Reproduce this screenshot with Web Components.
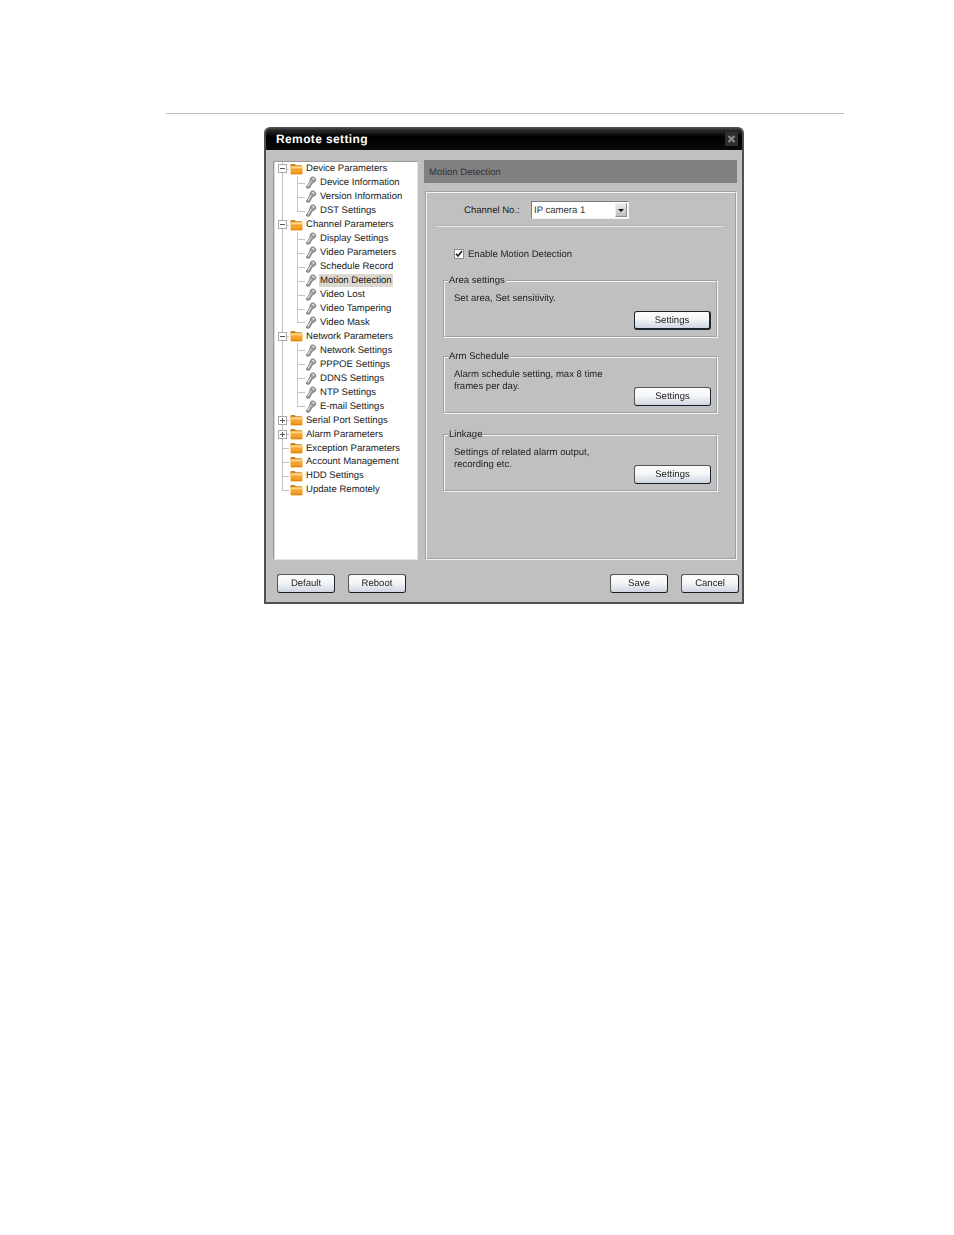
<!DOCTYPE html>
<html>
<head>
<meta charset="utf-8">
<title>Remote setting</title>
<style>
  html, body { margin: 0; background: #fff; }
  body { font: 9.55px "Liberation Sans", Arial, sans-serif; color: #333; text-rendering: geometricPrecision; }
</style>
</head>
<body>
<manual-page>
  <remote-window heading="Remote setting">
    <tree-view slot="tree">
      <tree-row kind="open" label="Device Parameters"></tree-row>
      <tree-row kind="leaf" label="Device Information"></tree-row>
      <tree-row kind="leaf" label="Version Information"></tree-row>
      <tree-row kind="leaf" last label="DST Settings"></tree-row>
      <tree-row kind="open" label="Channel Parameters"></tree-row>
      <tree-row kind="leaf" label="Display Settings"></tree-row>
      <tree-row kind="leaf" label="Video Parameters"></tree-row>
      <tree-row kind="leaf" label="Schedule Record"></tree-row>
      <tree-row kind="leaf" selected label="Motion Detection"></tree-row>
      <tree-row kind="leaf" label="Video Lost"></tree-row>
      <tree-row kind="leaf" label="Video Tampering"></tree-row>
      <tree-row kind="leaf" last label="Video Mask"></tree-row>
      <tree-row kind="open" label="Network Parameters"></tree-row>
      <tree-row kind="leaf" label="Network Settings"></tree-row>
      <tree-row kind="leaf" label="PPPOE Settings"></tree-row>
      <tree-row kind="leaf" label="DDNS Settings"></tree-row>
      <tree-row kind="leaf" label="NTP Settings"></tree-row>
      <tree-row kind="leaf" last label="E-mail Settings"></tree-row>
      <tree-row kind="closed" label="Serial Port Settings"></tree-row>
      <tree-row kind="closed" label="Alarm Parameters"></tree-row>
      <tree-row kind="plain" label="Exception Parameters"></tree-row>
      <tree-row kind="plain" label="Account Management"></tree-row>
      <tree-row kind="plain" label="HDD Settings"></tree-row>
      <tree-row kind="plain" last label="Update Remotely"></tree-row>
    </tree-view>

    <motion-panel slot="content" heading="Motion Detection">
      <group-box heading="Area settings" style="height:63px">
        Set area, Set sensitivity.
        <ui-button slot="action" wide focused style="margin-bottom:-1px">Settings</ui-button>
      </group-box>
      <group-box heading="Arm Schedule" style="height:63px;margin-top:13px">
        Alarm schedule setting, max 8 time<br>frames per day.
        <ui-button slot="action" wide>Settings</ui-button>
      </group-box>
      <group-box heading="Linkage" style="height:63px;margin-top:15px">
        Settings of related alarm output,<br>recording etc.
        <ui-button slot="action" wide>Settings</ui-button>
      </group-box>
    </motion-panel>

    <ui-button slot="left">Default</ui-button>
    <ui-button slot="left">Reboot</ui-button>
    <ui-button slot="right">Save</ui-button>
    <ui-button slot="right">Cancel</ui-button>
  </remote-window>
</manual-page>

<script>
const TEXT_FONT = '"Liberation Sans", Arial, sans-serif';

class ManualPage extends HTMLElement {
  constructor() {
    super();
    this.attachShadow({ mode: 'open' });
    this.shadowRoot.innerHTML = `
      <style>
        :host { display: block; padding: 113px 110px 0 166px; height: 1122px; }
        .rule { height: 1px; background: #bdbdbd; margin-bottom: 13px; }
        .stage { padding-left: 98px; }
      </style>
      <div class="rule"></div>
      <div class="stage"><slot></slot></div>
    `;
  }
}

class RemoteWindow extends HTMLElement {
  constructor() {
    super();
    this.attachShadow({ mode: 'open' });
    this.shadowRoot.innerHTML = `
      <style>
        :host { display: block; width: 480px; height: 477px; font: 9.55px ${TEXT_FONT}; }
        .frame { height: 100%; box-sizing: border-box; display: flex; flex-direction: column;
          border-radius: 6px 6px 0 0; overflow: hidden; background: #c0c0c0;
          border: solid #505050; border-width: 0 2px 2px; filter: blur(.35px); }
        .title { height: 23px; flex: none; margin: 0 -2px; display: flex; align-items: center; justify-content: space-between;
          padding: 0 6px 0 12px; background: linear-gradient(#5c5c5c 0, #2a2a2a 3px, #000 10px, #0a0a0a 100%); }
        .title span { color: #fff; font: bold 12px ${TEXT_FONT}; letter-spacing: .38px; }
        .close { width: 13px; height: 14px; background: #2e2e2e; display: flex; }
        .close svg { width: 13px; height: 14px; }
        .main { flex: none; display: flex; gap: 6px; padding: 10px 5px 0 7px; height: 410px; box-sizing: border-box; }
        .foot { flex: 1; display: flex; justify-content: space-between; padding: 14px 3px 0 11px; }
        .foot div { display: flex; }
        .foot .l, .foot .r { gap: 13px; }
      </style>
      <div class="frame">
        <div class="title">
          <span></span>
          <div class="close"><svg viewBox="0 0 13 14"><path d="M3.500 4l6 6M9.500 4l-6 6" stroke="#8e8e8e" stroke-width="2" fill="none"/></svg></div>
        </div>
        <div class="main"><slot name="tree"></slot><slot name="content"></slot></div>
        <div class="foot">
          <div class="l"><slot name="left"></slot></div>
          <div class="r"><slot name="right"></slot></div>
        </div>
      </div>
    `;
    this.shadowRoot.querySelector('.title span').textContent = this.getAttribute('heading');
  }
}

class TreeView extends HTMLElement {
  constructor() {
    super();
    this.attachShadow({ mode: 'open' });
    this.shadowRoot.innerHTML = `
      <style>
        :host { display: block; width: 145px; height: 399px; margin-top: 1px; box-sizing: border-box; background: #fff;
          border: 1px solid #e4e4e4; border-left-color: #9a9a9a; border-top-color: #9a9a9a;
          box-shadow: inset 1px 0 #d8d8d8; padding: 0 0 0 1px; overflow: hidden; }
      </style>
      <slot></slot>
    `;
  }
}

const FOLDER_ICON = `<svg width="13" height="12" viewBox="0 0 13 12">
  <path d="M.5 4V1.800q0-.8.8-.8h3.400l1 1.200h5.500q.8 0 .8.8V4z" fill="#c9831a"/>
  <rect x=".5" y="3" width="12" height="8.500" rx="1.200" fill="#f5a32c"/>
  <rect x="1" y="3.400" width="11" height="2" fill="#fcd68c"/>
  <rect x="1" y="9.500" width="11" height="1.500" fill="#e08c18"/>
</svg>`;

const KEY_ICON = `<svg width="12" height="13" viewBox="0 0 12 13">
  <path d="M7 1C9 .5 11 2 10.800 4 10.600 5.500 9.500 6.300 8 6.200L5.500 10 5 11.500 3.500 12.300 1.500 12 1.500 10.500 3.200 8.500 5 4.500C4.900 3 5.500 1.500 7 1z" fill="#9a9a9a" stroke="#777" stroke-width=".8"/>
  <path d="M7.300 2.200 9.300 3.500" stroke="#f2f2f2" stroke-width="1.200" fill="none"/>
  <path d="M6.200 4.800 3 10.400" stroke="#eaeaea" stroke-width="1" fill="none"/>
</svg>`;

class TreeRow extends HTMLElement {
  constructor() {
    super();
    this.attachShadow({ mode: 'open' });
    const kind = this.getAttribute('kind');
    const leaf = kind === 'leaf';
    const last = this.hasAttribute('last');
    const box = kind === 'open' || kind === 'closed'
      ? `<span class="box">${kind === 'closed' ? '<i class="v"></i>' : ''}<i class="h"></i></span>` : '';
    this.shadowRoot.innerHTML = `
      <style>
        :host { display: flex; height: 13.96px; align-items: center; white-space: nowrap;
          font: 9.55px ${TEXT_FONT}; color: #222; }
        .cell { flex: none; align-self: stretch; display: flex; align-items: center; justify-content: center; }
        .trunk { width: 14px;
          background:
            linear-gradient(#c0c0c0, #c0c0c0) 7px 0 / 1px 100% no-repeat,
            linear-gradient(#c0c0c0, #c0c0c0) 7px 7px / 7px 1px no-repeat; }
        :host([kind=plain][last]) .trunk {
          background:
            linear-gradient(#c0c0c0, #c0c0c0) 7px 0 / 1px 50% no-repeat,
            linear-gradient(#c0c0c0, #c0c0c0) 7px 7px / 7px 1px no-repeat; }
        :host([kind=leaf]) .trunk { background: linear-gradient(#c0c0c0, #c0c0c0) 7px 0 / 1px 100% no-repeat; }
        .branch { width: 16px;
          background:
            linear-gradient(#cacaca, #cacaca) 8px 0 / 1px ${last ? '50%' : '100%'} no-repeat,
            linear-gradient(#c0c0c0, #c0c0c0) 8px 7px / 8px 1px no-repeat; }
        .box { width: 9px; height: 9px; box-sizing: border-box; border: 1px solid #a8a8a8; background: #fff; display: flex; position: relative; left: .5px; }
        .box i { position: absolute; background: #555; }
        .box .h { left: 1px; top: 3px; width: 5px; height: 1px; }
        .box .v { left: 3px; top: 1px; width: 1px; height: 5px; }
        .icon { flex: none; display: flex; }
        svg { display: block; }
        .root { margin-left: 1px; }
        .label { margin-left: 2px; padding: 1px 1px 0; line-height: 12px; }
        .leaf-label { margin-left: 2px; }
        :host([selected]) .label { background: #ddd8cf; color: #181818; }
      </style>
      <span class="cell trunk">${box}</span>
      ${leaf ? '<span class="cell branch"></span>' : ''}
      <span class="icon ${leaf ? '' : 'root'}">${leaf ? KEY_ICON : FOLDER_ICON}</span>
      <span class="label ${leaf ? 'leaf-label' : ''}"></span>
    `;
    this.shadowRoot.querySelector('.label').textContent = this.getAttribute('label');
  }
}

class MotionPanel extends HTMLElement {
  constructor() {
    super();
    this.attachShadow({ mode: 'open' });
    this.shadowRoot.innerHTML = `
      <style>
        :host { display: block; width: 313px; color: #222; font: 9.55px ${TEXT_FONT}; }
        .head { height: 23px; box-sizing: border-box; background: #808080; display: flex; align-items: center; padding: 1px 5px 0; color: #333; }
        .body { margin: 8px 0 0 1px; height: 369px; box-sizing: border-box; border: 2px groove #f4f4f4; padding: 8px 12px 0 10px; }
        .channel { display: flex; align-items: center; height: 18px; padding-left: 27px; }
        .channel label { width: 67px; }
        hr { height: 1px; border: 0; background: #ececec; box-shadow: 0 -1px #b0b0b0; margin: 7px 0 0; }
        .enable { display: flex; align-items: center; gap: 4px; margin: 21px 0 0 17px; height: 12px; }
        .check { width: 10px; height: 10px; box-sizing: border-box; background: #fff; border: 1px solid #8a8a8a; display: flex; }
        .check svg { width: 8px; height: 8px; }
        .groups { margin: 15px 5px 0 6px; }
      </style>
      <div class="head"></div>
      <div class="body">
        <div class="channel"><label>Channel No.:</label><drop-select value="IP camera 1"></drop-select></div>
        <hr>
        <div class="enable">
          <span class="check"><svg viewBox="0 0 8 8"><path d="M1 3.800l2 2.200 4-5" stroke="#222" stroke-width="1.700" fill="none"/></svg></span>
          <span>Enable Motion Detection</span>
        </div>
        <div class="groups"><slot></slot></div>
      </div>
    `;
    this.shadowRoot.querySelector('.head').textContent = this.getAttribute('heading');
  }
}

class DropSelect extends HTMLElement {
  constructor() {
    super();
    this.attachShadow({ mode: 'open' });
    this.shadowRoot.innerHTML = `
      <style>
        :host { display: flex; width: 98px; height: 18px; box-sizing: border-box; background: #fff; align-items: center;
          border: 1px solid #f2f2f2; border-left-color: #7c7c7c; border-top-color: #7c7c7c; padding-left: 2px; color: #333; }
        span { flex: 1; }
        .arrow { flex: none; width: 12px; height: 14px; margin-right: 1px; background: linear-gradient(#ececec, #bdbdbd); box-sizing: border-box;
          border: 1px solid #8c8c8c; border-left-color: #eee; border-top-color: #eee; display: flex; align-items: center; justify-content: center; }
        .arrow i { border: 3px solid transparent; border-top: 3px solid #111; border-bottom: 0; }
      </style>
      <span></span><div class="arrow"><i></i></div>
    `;
    this.shadowRoot.querySelector('span').textContent = this.getAttribute('value');
  }
}

class GroupBox extends HTMLElement {
  constructor() {
    super();
    this.attachShadow({ mode: 'open' });
    this.shadowRoot.innerHTML = `
      <style>
        :host { display: block; box-sizing: border-box; }
        fieldset { height: 100%; box-sizing: border-box; margin: 0; padding: 6px 5px 0 9px; border: 2px groove #f4f4f4; display: grid; grid-template-rows: auto 1fr; }
        legend { padding: 0 1px; margin-left: -6px; line-height: 12px; }
        .text { line-height: 12px; }
        .action { justify-self: end; align-self: end; margin-bottom: 6px; height: 19px; margin-top: -12px; }
      </style>
      <fieldset>
        <legend></legend>
        <div class="text"><slot></slot></div>
        <div class="action"><slot name="action"></slot></div>
      </fieldset>
    `;
    this.shadowRoot.querySelector('legend').textContent = this.getAttribute('heading');
  }
}

class UiButton extends HTMLElement {
  constructor() {
    super();
    this.attachShadow({ mode: 'open' });
    this.shadowRoot.innerHTML = `
      <style>
        :host { display: flex; width: 58px; height: 19px; box-sizing: border-box; align-items: center; justify-content: center;
          font: 9.55px ${TEXT_FONT}; color: #222; border: 1px solid #2a3038; border-radius: 3px;
          border-color: #555 #20262e #161c26 #555;
          background: linear-gradient(#fdfdfd, #f4f6f8 45%, #cfd6e0); }
        :host([wide]) { width: 77px; }
        :host([focused]) { border: 2px solid #1e2630; border-width: 1px 2px 2px 1px; }
      </style>
      <slot></slot>
    `;
  }
}

customElements.define('manual-page', ManualPage);
customElements.define('remote-window', RemoteWindow);
customElements.define('tree-view', TreeView);
customElements.define('tree-row', TreeRow);
customElements.define('motion-panel', MotionPanel);
customElements.define('drop-select', DropSelect);
customElements.define('group-box', GroupBox);
customElements.define('ui-button', UiButton);
</script>
</body>
</html>
